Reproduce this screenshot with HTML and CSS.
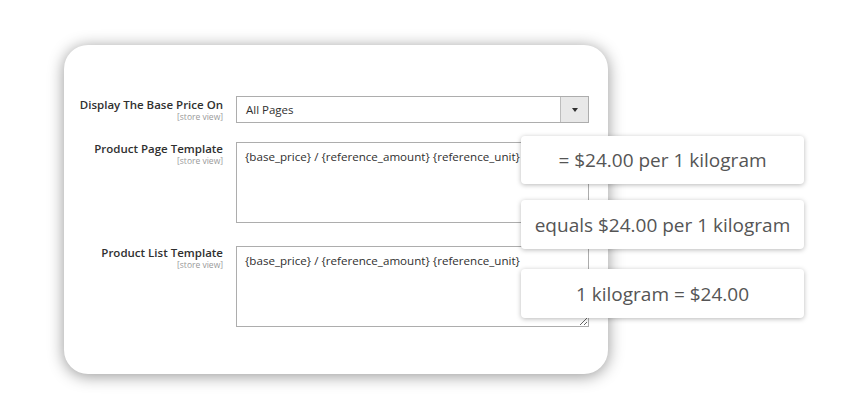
FILE: index.html
```html
<!DOCTYPE html>
<html>
<head>
<meta charset="utf-8">
<link rel="stylesheet" href="styles.css">
</head>
<body>
<div class="stage">
  <div class="card">
    <div class="row row-select">
      <div class="label">
        <span class="label-title">Display The Base Price On</span>
        <span class="scope">[store view]</span>
      </div>
      <div class="select">
        <span class="select-value">All Pages</span>
        <span class="select-btn"><span class="arrow"></span></span>
      </div>
    </div>
    <div class="row row-page">
      <div class="label">
        <span class="label-title">Product Page Template</span>
        <span class="scope">[store view]</span>
      </div>
      <textarea class="area" readonly>{base_price} / {reference_amount} {reference_unit}</textarea>
    </div>
    <div class="row row-list">
      <div class="label">
        <span class="label-title">Product List Template</span>
        <span class="scope">[store view]</span>
      </div>
      <textarea class="area" readonly>{base_price} / {reference_amount} {reference_unit}</textarea>
    </div>
  </div>
  <div class="tips">
    <div class="tip tip1">= $24.00 per 1 kilogram</div>
    <div class="tip tip2">equals $24.00 per 1 kilogram</div>
    <div class="tip tip3">1 kilogram = $24.00</div>
  </div>
</div>
</body>
</html>
```
FILE: styles.css
```css
html, body {
  margin: 0;
  padding: 0;
  background: #ffffff;
}
body {
  width: 850px;
  height: 420px;
  overflow: hidden;
  font-family: "Open Sans", "Noto Sans", sans-serif;
}
.stage {
  position: relative;
  width: 850px;
  height: 420px;
  padding: 45px 0 0 64px;
  box-sizing: border-box;
}
.card {
  width: 544px;
  height: 329px;
  box-sizing: border-box;
  background: #fff;
  border-radius: 24px;
  box-shadow: 0 2px 16px rgba(0, 0, 0, 0.42);
  padding: 51px 0 0 0;
}
.row {
  display: grid;
  grid-template-columns: 159px 353px;
  column-gap: 13px;
}
.row-page { margin-top: 19px; }
.row-list { margin-top: 23px; }
.label {
  display: flex;
  flex-direction: column;
  align-items: flex-end;
  text-align: right;
  padding-top: 2px;
}
.row-page .label, .row-list .label { padding-top: 0; }
.label-title {
  font-size: 11.5px;
  font-weight: 600;
  color: #303030;
  line-height: 14px;
  white-space: nowrap;
}
.scope {
  font-size: 8.5px;
  color: #9a9a9a;
  line-height: 10px;
  margin-top: 0;
  white-space: nowrap;
}
.select {
  height: 27px;
  box-sizing: border-box;
  border: 1px solid #adadad;
  display: flex;
  align-items: center;
  background: #fff;
}
.select-value {
  flex: 1;
  font-size: 11.5px;
  color: #303030;
  padding-left: 9px;
}
.select-btn {
  width: 27px;
  height: 100%;
  background: #e8e8e8;
  border-left: 1px solid #bdbdbd;
  display: flex;
  align-items: center;
  justify-content: center;
}
.arrow {
  width: 0;
  height: 0;
  border-left: 3px solid transparent;
  border-right: 3px solid transparent;
  border-top: 4px solid #303030;
}
.area {
  display: block;
  width: 353px;
  height: 81px;
  box-sizing: border-box;
  border: 1px solid #adadad;
  border-radius: 0;
  margin: 0;
  padding: 6px 8px;
  font-family: "Open Sans", "Noto Sans", sans-serif;
  font-size: 11.6px;
  line-height: 15px;
  color: #303030;
  resize: both;
  outline: none;
  background: #fff;
}
.tips {
  position: absolute;
  left: 521px;
  top: 136px;
  width: 283px;
  display: flex;
  flex-direction: column;
}
.tip {
  height: 48px;
  box-sizing: border-box;
  background: #fff;
  border-radius: 4px;
  box-shadow: 0 1px 5px rgba(0, 0, 0, 0.28);
  display: flex;
  align-items: center;
  justify-content: center;
  font-size: 19px;
  color: #555;
}
.tip2 { margin-top: 16px; height: 49px; }
.tip3 { margin-top: 20px; height: 49px; }
```
